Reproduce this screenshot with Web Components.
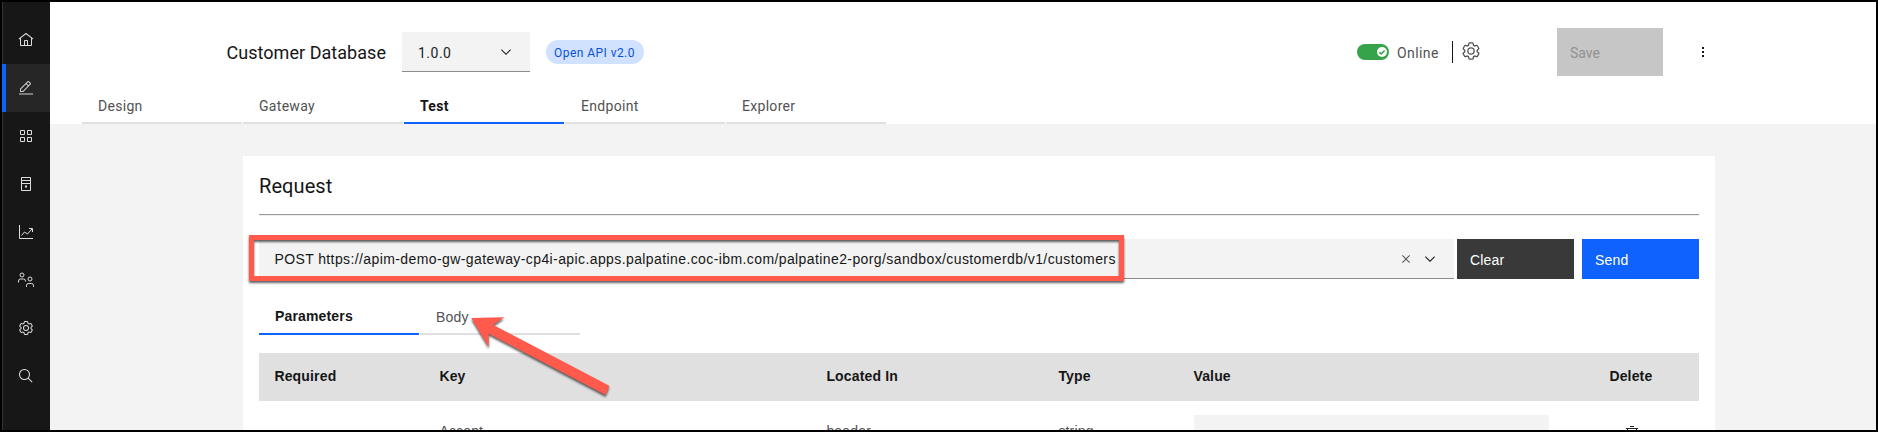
<!DOCTYPE html>
<html lang="en">
<head>
<meta charset="utf-8">
<title>Customer Database</title>
<style>
html,body{margin:0;height:432px;overflow:hidden;background:#000}
</style>
</head>
<body>
<api-app></api-app>
<script>
const GEAR='<path d="M27,16.76c0-.25,0-.5,0-.76s0-.51,0-.77l1.92-1.68A2,2,0,0,0,29.3,11L26.94,7a2,2,0,0,0-1.73-1,2,2,0,0,0-.64.1l-2.43.82a11.35,11.35,0,0,0-1.31-.75l-.51-2.52a2,2,0,0,0-2-1.61H13.64a2,2,0,0,0-2,1.61l-.51,2.52a11.48,11.48,0,0,0-1.32.75L7.43,6.06A2,2,0,0,0,6.79,6,2,2,0,0,0,5.06,7L2.7,11a2,2,0,0,0,.41,2.51L5,15.24c0,.25,0,.5,0,.76s0,.51,0,.77L3.11,18.45A2,2,0,0,0,2.7,21L5.06,25a2,2,0,0,0,1.73,1,2,2,0,0,0,.64-.1l2.43-.82a11.35,11.35,0,0,0,1.31.75l.51,2.52a2,2,0,0,0,2,1.61h4.72a2,2,0,0,0,2-1.61l.51-2.52a11.48,11.48,0,0,0,1.32-.75l2.42.82a2,2,0,0,0,.64.1,2,2,0,0,0,1.73-1L29.3,21a2,2,0,0,0-.41-2.51ZM25.21,24l-3.43-1.16a8.86,8.86,0,0,1-2.71,1.57L18.36,28H13.64l-.71-3.55a9.36,9.36,0,0,1-2.7-1.57L6.79,24,4.43,20l2.72-2.4a8.9,8.9,0,0,1,0-3.13L4.43,12,6.79,8l3.43,1.16a8.86,8.86,0,0,1,2.71-1.57L13.64,4h4.72l.71,3.55a9.36,9.36,0,0,1,2.7,1.57L25.21,8,27.57,12l-2.72,2.4a8.9,8.9,0,0,1,0,3.13L27.57,20Z"/><path d="M16,22a6,6,0,1,1,6-6A5.94,5.94,0,0,1,16,22Zm0-10a3.91,3.91,0,0,0-4,4,3.91,3.91,0,0,0,4,4,3.91,3.91,0,0,0,4-4A3.91,3.91,0,0,0,16,12Z"/>';
const S='fill="none" stroke="currentColor" stroke-width="2"';
const ICONS={
 home:'<path d="M16.6123,2.2138a1.01,1.01,0,0,0-1.2427,0L1,13.4194l1.2427,1.5717L4,13.6208V26a2.0041,2.0041,0,0,0,2,2H26a2.0037,2.0037,0,0,0,2-2V13.63L29.7573,15,31,13.4282ZM18,26H14V18h4Zm2,0V18a2.0023,2.0023,0,0,0-2-2H14a2.002,2.002,0,0,0-2,2v8H6V12.0615l10-7.79,10,7.8005V26Z"/>',
 edit:'<path d="M2 27H30V29H2z"/><path d="M25.4,9c0.8-0.8,0.8-2,0-2.8l-3.6-3.6c-0.8-0.8-2-0.8-2.8,0l-15,15V24h6.4L25.4,9z M20.4,4L24,7.6l-3,3L17.4,7L20.4,4z M6,22v-3.6l10-10l3.6,3.6l-10,10H6z"/>',
 grid:`<path ${S} d="M5 5h8v8H5zM19 5h8v8h-8zM5 19h8v8H5zM19 19h8v8h-8z"/>`,
 server:`<path ${S} d="M7 3h18v26H7zM7 9h18M7 15h18"/><path d="M14 19h4v4h-4z"/>`,
 chart:`<path ${S} d="M3 2v27h27M7 23l6-7 6 4 9-10M22 9h7v7"/>`,
 users:`<g ${S}><circle cx="8" cy="6" r="4"/><path d="M1 21v-3a4 4 0 0 1 4-4h6a4 4 0 0 1 4 4v1"/><circle cx="24" cy="14" r="4"/><path d="M17 30v-3a4 4 0 0 1 4-4h6a4 4 0 0 1 4 4v3"/></g>`,
 gear:GEAR,
 search:'<path d="M29,27.5859l-7.5521-7.5521a11.0177,11.0177,0,1,0-1.4141,1.4141L27.5859,29ZM4,13a9,9,0,1,1,9,9A9.01,9.01,0,0,1,4,13Z"/>',
 chevron:'<path d="M16 22L6 12 7.4 10.6 16 19.2 24.6 10.6 26 12z"/>',
 close:'<path d="M24 9.4L22.6 8 16 14.6 9.4 8 8 9.4 14.6 16 8 22.6 9.4 24 16 17.4 22.6 24 24 22.6 17.4 16z"/>',
 more:'<path d="M14 6h4v4h-4zM14 14h4v4h-4zM14 22h4v4h-4z"/>',
 trash:'<path d="M12 12H14V24H12zM18 12H20V24H18z"/><path d="M4 6V8H6V28a2 2 0 0 0 2 2H24a2 2 0 0 0 2-2V8h2V6zM8 28V8H24V28zM12 2H20V4H12z"/>'
};
function define(name,html){
 const t=document.createElement('template');t.innerHTML=html;
 customElements.define(name,class extends HTMLElement{
  constructor(){super();this.attachShadow({mode:'open'}).append(t.content.cloneNode(true))}
 });
}
customElements.define('ui-icon',class extends HTMLElement{
 constructor(){super();this.attachShadow({mode:'open'})}
 connectedCallback(){
  this.shadowRoot.innerHTML=`<style>:host{display:block;flex:none;width:var(--size,16px);height:var(--size,16px)}svg{display:block;width:100%;height:100%;fill:currentColor}</style><svg viewBox="0 0 32 32">${ICONS[this.getAttribute('name')]}</svg>`;
 }
});
define('nav-item',`<style>
:host{display:flex;align-items:center;justify-content:center;height:48px;box-sizing:border-box;color:#dedede;border-left:1px solid #333;padding-right:1px}
:host([active]){background:#262626;border-left:4px solid #0f62fe;padding-right:4px;color:#d0d0d0}
</style><slot></slot>`);
define('side-nav',`<style>
:host{display:flex;flex-direction:column;width:48px;background:#171717}
.pad{height:14px;border-left:1px solid #333}.end{flex:1;border-left:1px solid #333}
</style><div class="pad"></div>
<nav-item><ui-icon name="home"></ui-icon></nav-item>
<nav-item active><ui-icon name="edit"></ui-icon></nav-item>
<nav-item><ui-icon name="grid"></ui-icon></nav-item>
<nav-item><ui-icon name="server"></ui-icon></nav-item>
<nav-item><ui-icon name="chart"></ui-icon></nav-item>
<nav-item><ui-icon name="users"></ui-icon></nav-item>
<nav-item><ui-icon name="gear"></ui-icon></nav-item>
<nav-item><ui-icon name="search"></ui-icon></nav-item>
<div class="end"></div>`);
define('ui-tab',`<style>
:host{display:block;box-sizing:border-box;width:160px;height:var(--tab-h,37px);padding:var(--tab-pad,10px) 16px 0;line-height:18px;border-bottom:2px solid #e0e0e0;color:#525252;font-size:14px}
:host([active]){border-color:#0f62fe;color:#161616;font-weight:700}
</style><slot></slot>`);
define('tab-list',`<style>:host{display:flex;gap:1px}</style><slot></slot>`);
define('ui-tag',`<style>:host{display:flex;align-items:center;box-sizing:border-box;height:24px;padding-top:1px;border-radius:12px;background:#d0e2ff;color:#0a4fdc;font-size:12px}</style><slot></slot>`);
define('ui-select',`<style>:host{display:flex;align-items:center;justify-content:space-between;box-sizing:border-box;height:40px;background:#f3f3f3;border-bottom:1px solid #8d8d8d;padding:0 16px;color:#222;font-size:14px}span{padding-top:2px}</style><span><slot></slot></span><ui-icon name="chevron"></ui-icon>`);
define('ui-toggle',`<style>:host{display:flex;justify-content:flex-end;align-items:center;box-sizing:border-box;width:32px;height:16px;padding-right:2px;border-radius:8px;background:#36a34a}svg{display:block}</style>
<svg width="10" height="10" viewBox="0 0 10 10"><circle cx="5" cy="5" r="5" fill="#fff"/><path d="M2.4 5.1l1.8 1.8 3.4-3.5" fill="none" stroke="#36a34a" stroke-width="1.5"/></svg>`);
define('ui-button',`<style>:host{display:flex;align-items:center;box-sizing:border-box;color:#fff;font-size:14px}</style><slot></slot>`);
define('app-header',`<style>
:host{display:flex;flex-direction:column;height:122px;background:#fff;color:#161616;font-family:Roboto,sans-serif}
.bar{display:flex;height:84px;flex:none;align-items:center;padding-left:176.5px;box-sizing:border-box;padding-top:16px}
h1{font-size:18px;font-weight:400;margin:0;width:175.5px;letter-spacing:.04px;line-height:24px;padding-top:2px;white-space:nowrap}
ui-select{width:128px;letter-spacing:.5px}
ui-tag{margin:0 0 0 16px;width:98px;padding-left:8px;letter-spacing:.45px}
.sp{width:713px}
.on{margin-left:8px;width:55px;font-size:14px;color:#525252;letter-spacing:.4px;padding-top:2px}
.div{width:1px;height:22px;background:#161616}
.g{--size:20px;color:#525252;margin:-2px 0 0 8px}
ui-button{margin-left:76px;width:106px;height:48px;background:#c6c6c6;color:#919191;padding:2px 0 0 13px}
.m{margin-left:32px}
.bar>*{flex:none}
tab-list{margin:1px 0 0 32px;letter-spacing:.3px}
</style>
<div class="bar"><h1>Customer Database</h1><ui-select>1.0.0</ui-select><ui-tag>Open API v2.0</ui-tag><span class="sp"></span><ui-toggle></ui-toggle><span class="on">Online</span><span class="div"></span><ui-icon class="g" name="gear"></ui-icon><ui-button>Save</ui-button><ui-icon class="m" name="more"></ui-icon></div>
<tab-list><ui-tab>Design</ui-tab><ui-tab>Gateway</ui-tab><ui-tab active>Test</ui-tab><ui-tab>Endpoint</ui-tab><ui-tab>Explorer</ui-tab></tab-list>`);
define('param-table',`<style>
:host{display:block;font-size:14px;letter-spacing:.16px}
.row{display:grid;grid-template-columns:165px 387px 232px 135px 416px 1fr;padding-left:16px}
.row span:not(.in){margin-left:-.6px}
.head{height:48px;background:#e0e0e0;font-weight:700;color:#161616;line-height:47px}
.body{height:60px;color:#525252;line-height:60px}
.in{margin-top:14px;width:355px;height:40px;background:#f3f3f3}
ui-icon{margin:24px 0 0 13.5px;color:#222}
</style>
<div class="row head"><span>Required</span><span>Key</span><span>Located In</span><span>Type</span><span>Value</span><span>Delete</span></div>
<div class="row body"><span></span><span>Accept</span><span>header</span><span>string</span><span class="in"></span><ui-icon name="trash"></ui-icon></div>`);
define('request-panel',`<style>
:host{display:block;box-sizing:border-box;width:1472px;height:320px;background:#fff;margin:32px 0 0 193px;padding:0 16px;font-family:"Liberation Sans",Arial,sans-serif;color:#161616}
h2{font:400 20px/24px Roboto,sans-serif;margin:0;padding-top:18px;height:40px;letter-spacing:.08px}
.hr{height:1px;background:#999;border-bottom:1px solid #eee}
.line{display:flex;margin-top:23px}
.url{display:flex;align-items:center;box-sizing:border-box;width:1195px;height:40px;background:#f3f3f3;border-bottom:1px solid #8d8d8d;padding-left:15.4px;font-size:14px;letter-spacing:.4px;white-space:nowrap}
.url span{flex:1}.x{margin-right:8px;color:#525252}.c{margin-right:16px}
ui-button{width:117px;height:40px;letter-spacing:.16px;padding-top:2px}
.clear{background:#393939;margin:0 8px 0 3px;padding-left:13px}.send{background:#0f62fe;padding-left:13px}
tab-list{margin:18px 0;--tab-h:38px;--tab-pad:10px;letter-spacing:.16px}
.b{--tab-pad:11px}
</style>
<h2>Request</h2><div class="hr"></div>
<div class="line"><div class="url"><span>POST https://apim-demo-gw-gateway-cp4i-apic.apps.palpatine.coc-ibm.com/palpatine2-porg/sandbox/customerdb/v1/customers</span><ui-icon class="x" name="close"></ui-icon><ui-icon class="c" name="chevron"></ui-icon></div><ui-button class="clear">Clear</ui-button><ui-button class="send">Send</ui-button></div>
<tab-list><ui-tab active>Parameters</ui-tab><ui-tab class="b">Body</ui-tab></tab-list>
<param-table></param-table>`);
define('callout-marks',`<style>
:host{position:absolute;inset:0;pointer-events:none}svg{display:block;filter:drop-shadow(0 2.5px 1px rgba(0,0,0,.62))}
</style><svg width="1878" height="432"><rect x="251.500" y="237.500" width="870" height="41" fill="none" stroke="#ff5a4c" stroke-width="5"/><path fill="#ff5a4c" d="M471.300 318L504.300 317.300 493.300 325 609.300 385.700 605.700 395 488.700 333.700 488.700 347z"/></svg>`);
define('api-app',`<style>
:host{display:flex;position:relative;box-sizing:border-box;width:1878px;height:432px;border:2px solid #000;overflow:hidden;background:#f3f3f3}
main{flex:1;min-width:0}
callout-marks{margin:-2px}
</style><side-nav></side-nav><main><app-header></app-header><request-panel></request-panel></main><callout-marks></callout-marks>`);
</script>
</body>
</html>
